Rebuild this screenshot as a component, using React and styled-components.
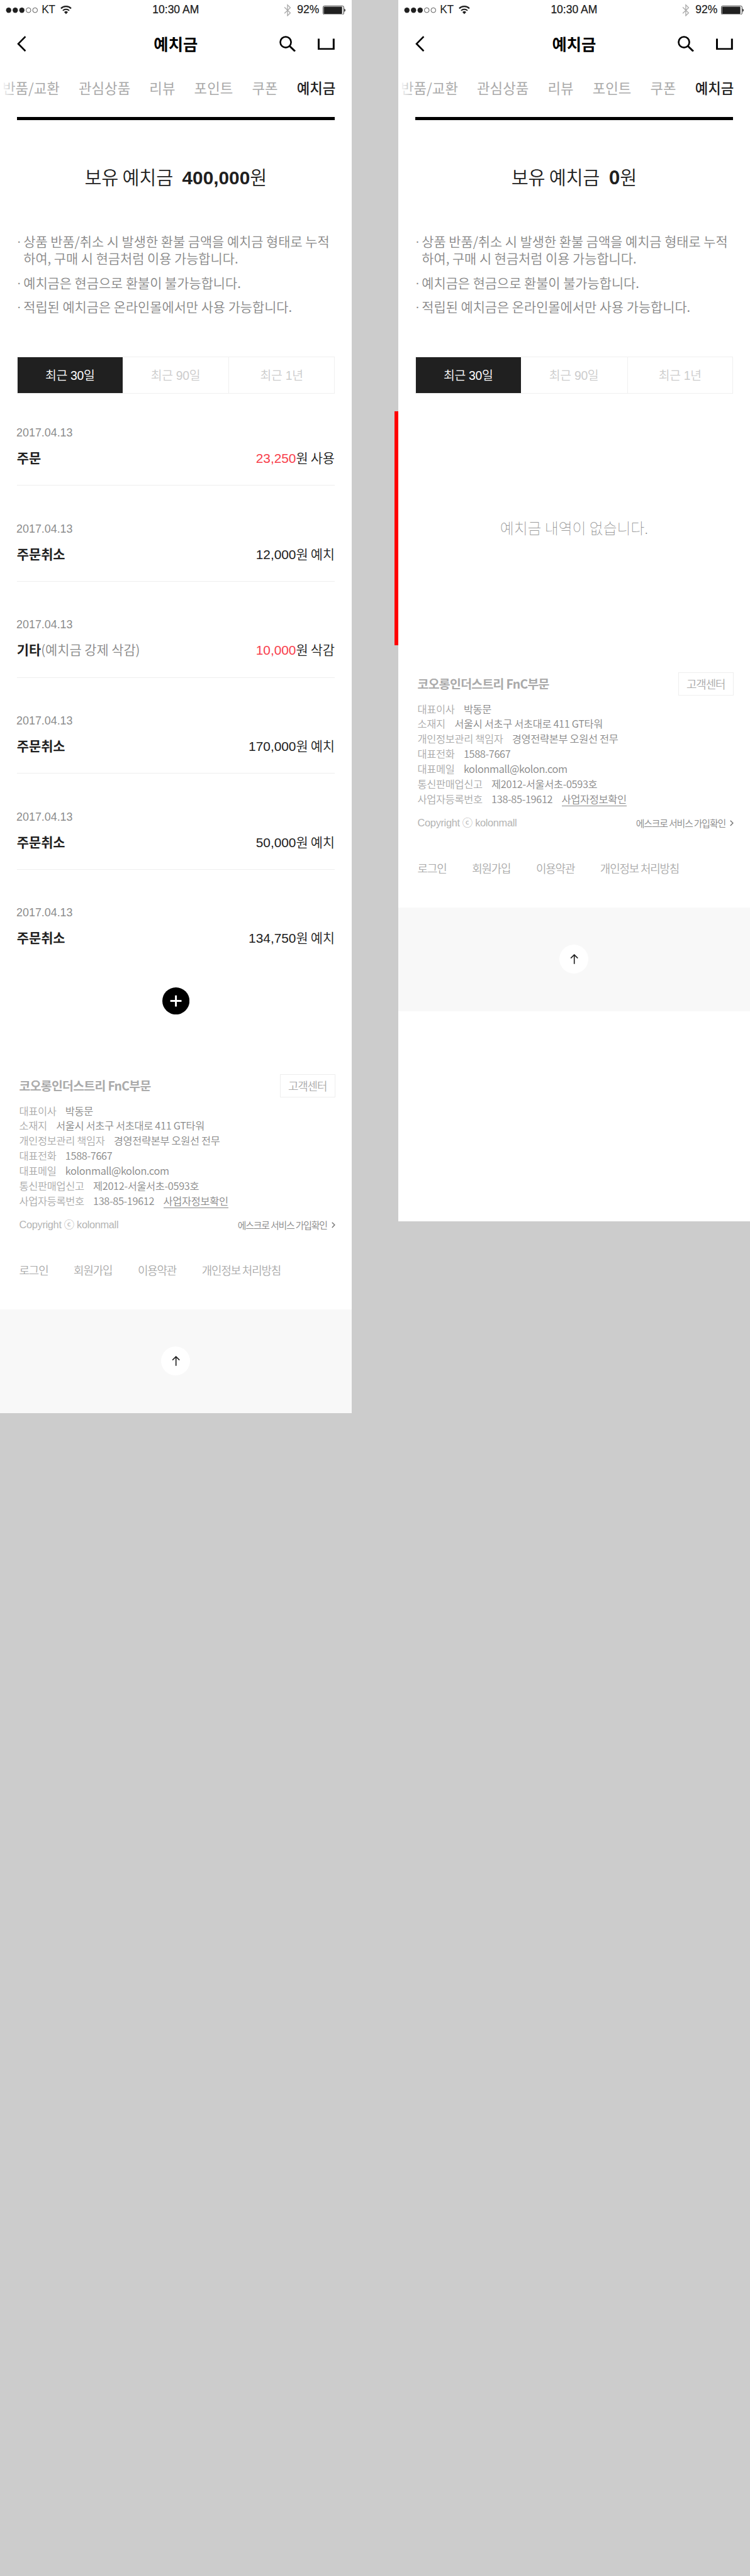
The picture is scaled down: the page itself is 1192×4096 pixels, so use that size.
import React from "react";
import styled, { createGlobalStyle } from "styled-components";

const SCALE = 0.7448;
const u = (n) => `${+(n * SCALE).toFixed(3)}px`;

const KR = `"Noto Sans CJK KR", sans-serif`;
const NUM = `"Liberation Sans", "Noto Sans CJK KR", sans-serif`;

const Global = createGlobalStyle`
  html, body { margin: 0; padding: 0; background: #ccc; }
  body { font-family: ${KR}; color: #202020; overflow-x: hidden; }
  *, *::before, *::after { box-sizing: border-box; }
  ul { list-style: none; margin: 0; padding: 0; }
  svg { display: block; flex: none; }
`;

const Board = styled.div`
  width: 1192px;
  height: 4096px;
  display: flex;
  align-items: flex-start;
  gap: ${u(100)};
  background: #ccc;
  overflow: hidden;
`;

const Screen = styled.section`
  position: relative;
  flex: none;
  width: ${u(750)};
  height: ${(p) => u(p.$height)};
  background: #fff;
`;

const StatusBar = styled.div`
  height: ${u(40)};
  padding: 0 ${u(12)};
  display: grid;
  grid-template-columns: 1fr auto 1fr;
  align-items: center;
  font: 400 ${u(23.5)} / ${u(40)} ${NUM};
`;

const StatusSide = styled.div`
  display: flex;
  align-items: center;
  justify-content: ${(p) => (p.$end ? "flex-end" : "flex-start")};
  height: ${u(40)};
  padding-top: ${u(1)};
`;

const Carrier = styled.span`
  margin: 0 ${u(12)} 0 ${u(7)};
  padding-top: ${u(1)};
  letter-spacing: ${u(-0.8)};
`;

const Clock = styled.span`
  padding-top: ${u(2)};
  -webkit-text-stroke: 0.25px #202020;
`;

const Percent = styled.span`
  margin: 0 ${u(8)} 0 ${u(13)};
  padding-top: ${u(1)};
  -webkit-text-stroke: 0.2px #202020;
`;

const TitleBar = styled.header`
  height: ${u(100)};
  padding: ${u(7)} ${u(36)} 0;
  display: grid;
  grid-template-columns: 1fr auto 1fr;
  align-items: center;
  color: #000;
`;

const PageTitle = styled.h1`
  margin: 0;
  font-size: ${u(34)};
  line-height: ${u(50)};
  font-weight: 700;
`;

const Actions = styled.div`
  display: flex;
  justify-content: flex-end;
  align-items: center;
  gap: ${u(46)};
`;

const Tabs = styled.nav`
  position: relative;
  height: ${u(110)};
  padding: ${u(25)} ${u(34)} 0 0;
  display: flex;
  justify-content: flex-end;
  gap: ${u(40.5)};
  overflow: hidden;
  font-size: ${u(30)};
  line-height: ${u(44)};
  white-space: nowrap;

  &::before {
    content: "";
    position: absolute;
    left: 0;
    top: 0;
    width: ${u(34)};
    height: 100%;
    background: linear-gradient(90deg, #fff 10%, rgba(255, 255, 255, 0));
  }
`;

const Tab = styled.span`
  flex: none;
  color: ${(p) => (p.$active ? "#202020" : "#aaa")};
  font-weight: ${(p) => (p.$active ? 500 : 400)};
`;

const Rule = styled.div`
  height: ${u(6)};
  margin: 0 ${u(36)};
  background: #000;
`;

const Balance = styled.p`
  margin: 0;
  padding-top: ${u(91)};
  height: ${u(241)};
  text-align: center;
  font-size: ${u(39.5)};
  line-height: ${u(60)};
  letter-spacing: ${u(-0.3)};
  font-weight: 350;
  white-space: pre;

  b {
    margin-left: ${u(11)};
    font-family: ${(p) => (p.$plain ? KR : NUM)};
    font-size: ${u(40)};
    letter-spacing: 0;
    font-weight: 700;
  }
`;

const Notes = styled.ul`
  height: ${u(264)};
  padding: 0 ${u(36)};
  display: flex;
  flex-direction: column;
  gap: ${u(16)};
  font-size: ${u(28)};
  line-height: ${u(36)};
  font-weight: 350;
  color: #888;
  white-space: nowrap;
`;

const Note = styled.li`
  display: flex;

  &::before {
    content: "·";
    width: ${u(14)};
    font-family: "Liberation Sans", sans-serif;
  }
`;

const Periods = styled.div`
  height: ${u(80)};
  margin: 0 ${u(36)};
  display: grid;
  grid-template-columns: ${u(224)} ${u(228)} 1fr;
  border: ${u(2)} solid #f0f0f0;
`;

const Period = styled.button`
  margin: 0;
  padding: 0 0 ${u(1)};
  border: 0;
  border-right: ${(p) => (p.$divided ? `${u(2)} solid #f0f0f0` : "0")};
  font-family: ${NUM};
  font-size: ${u(26)};
  letter-spacing: ${u(-0.4)};
  font-weight: 350;
  color: ${(p) => (p.$active ? "#fff" : "#ccc")};
  background: ${(p) => (p.$active ? "#202020" : "#fff")};
`;

const History = styled.ul`
  padding: 0 ${u(36)};
`;

const Entry = styled.li`
  height: ${(p) => u(p.$first ? 196 : 205)};
  padding-top: ${(p) => u(p.$first ? 68 : 77)};
  border-bottom: ${u(2)} solid ${(p) => (p.$last ? "transparent" : "#eee")};
`;

const EntryDate = styled.div`
  margin-left: ${u(-1)};
  font: 400 ${u(24)} / ${u(30)} ${NUM};
  color: #8c8c8c;
`;

const EntryLine = styled.div`
  margin-top: ${u(17)};
  display: flex;
  justify-content: space-between;
  font-size: ${u(28)};
  line-height: ${u(42)};
`;

const Kind = styled.span`
  font-weight: 700;

  small {
    font-size: inherit;
    font-weight: 350;
    color: #888;
  }
`;

const Amount = styled.span`
  font-weight: 350;
  letter-spacing: ${u(-0.3)};

  em {
    font-family: ${NUM};
    font-style: normal;
    letter-spacing: 0;
    color: ${(p) => (p.$minus ? "#f83e4b" : "inherit")};
  }
`;

const MoreRow = styled.div`
  display: flex;
  justify-content: center;
  padding-top: ${u(46)};
  height: ${u(231)};
`;

const Empty = styled.p`
  margin: 0;
  height: ${u(594)};
  padding-top: ${u(264)};
  text-align: center;
  font-size: ${u(32)};
  line-height: ${u(44)};
  font-weight: 100;
  color: #888;
`;

const Marker = styled.div`
  position: absolute;
  left: ${u(-8)};
  top: ${u(878)};
  width: ${u(8)};
  height: ${u(500)};
  background: #f00;
`;

const Footer = styled.footer`
  height: ${u(502)};
  padding: 0 ${u(35)} 0 ${u(41)};
  color: #aaa;
  white-space: nowrap;
`;

const FooterHead = styled.div`
  display: flex;
  justify-content: space-between;
  align-items: center;
  height: ${u(50)};
`;

const Company = styled.strong`
  font-size: ${u(26)};
  line-height: ${u(38)};
  padding-bottom: ${u(1)};
  letter-spacing: ${u(-0.9)};
  font-weight: 700;
`;

const HelpButton = styled.button`
  width: ${u(118)};
  height: ${u(50)};
  padding: 0;
  border: ${u(2)} solid #eee;
  background: none;
  color: inherit;
  font-family: inherit;
  font-size: ${u(24)};
  font-weight: 350;
  letter-spacing: ${u(-1.5)};
`;

const Info = styled.div`
  padding-top: ${u(13)};
  font-size: ${u(22)};
  line-height: ${u(32)};
  font-weight: 350;
  letter-spacing: ${u(-0.45)};
`;

const InfoRow = styled.div`
  display: flex;
  gap: ${u(19.3)};
`;

const InfoValue = styled.span`
  color: #888;
  height: ${u(31)};
  border-bottom: ${(p) => (p.$link ? `${u(2)} solid #888` : "0")};
`;

const Legal = styled.div`
  display: flex;
  justify-content: space-between;
  align-items: center;
  height: ${u(32)};
  margin-top: ${u(20)};
`;

const Copyright = styled.span`
  font: 400 ${u(22)} / ${u(32)} ${NUM};
  letter-spacing: ${u(-0.45)};
  color: #b4b4b4;
`;

const Escrow = styled.span`
  display: flex;
  align-items: center;
  gap: ${u(9)};
  font-size: ${u(20)};
  line-height: ${u(32)};
  letter-spacing: ${u(-1.55)};
  font-weight: 350;
  color: #888;
`;

const FooterNav = styled.nav`
  display: flex;
  gap: ${u(54.5)};
  margin-top: ${u(61)};
  font-size: ${u(24)};
  line-height: ${u(36)};
  letter-spacing: ${u(-1.5)};
  font-weight: 350;
`;

const TopBand = styled.div`
  height: ${u(222)};
  display: flex;
  align-items: center;
  justify-content: center;
  background: #f8f8f8;
`;

const TopButton = styled.button`
  width: ${u(62)};
  height: ${u(62)};
  padding: 0;
  border: 0;
  border-radius: 50%;
  background: #fff;
  display: flex;
  align-items: center;
  justify-content: center;
`;

const Icon = ({ w, h, children }) => (
  <svg width={w * SCALE} height={h * SCALE} viewBox={`0 0 ${w} ${h}`} fill="none">
    {children}
  </svg>
);

const Signal = () => (
  <Icon w={70} h={14}>
    {[0, 1, 2].map((i) => (
      <circle key={i} cx={6.4 + i * 14.1} cy="7" r="5.6" fill="#202020" />
    ))}
    {[3, 4].map((i) => (
      <circle key={i} cx={6.4 + i * 14.1} cy="7" r="5.1" stroke="#202020" />
    ))}
  </Icon>
);

const Wifi = () => (
  <Icon w={24} h={18}>
    <path d="M1.2 5.9a15.3 15.3 0 0 1 21.6 0" stroke="#202020" strokeWidth="2.9" />
    <path d="M5.2 10.6a9.6 9.6 0 0 1 13.6 0" stroke="#202020" strokeWidth="2.7" />
    <path d="M12 18l-4-4.2a5.7 5.7 0 0 1 8 0z" fill="#202020" />
  </Icon>
);

const Bluetooth = () => (
  <Icon w={16} h={28}>
    <path d="M1.500 7.500l12.500 12L8 25.500v-23l6 6-12.500 12" stroke="#aaa" strokeWidth="1.800" />
  </Icon>
);

const Battery = () => (
  <Icon w={49} h={20}>
    <rect x="0.75" y="0.75" width="44" height="18" rx="2.5" stroke="#202020" strokeWidth="1.2" />
    <rect x="2.2" y="2.2" width="39" height="15.1" rx="1.2" fill="#202020" />
    <path d="M46 6.500c3 1 3 5.500 0 6.500z" fill="#202020" />
  </Icon>
);

const Phone = ({ height, marker, balance, plain, entries }) => (
  <Screen $height={height}>
    <StatusBar>
      <StatusSide>
        <Signal />
        <Carrier>KT</Carrier>
        <Wifi />
      </StatusSide>
      <Clock>10:30 AM</Clock>
      <StatusSide $end>
        <Bluetooth />
        <Percent>92%</Percent>
        <Battery />
      </StatusSide>
    </StatusBar>
    <TitleBar>
      <Icon w={20} h={34}>
        <path d="M18 1.500L2.800 17 18 32.500" stroke="#000" strokeWidth="3.600" />
      </Icon>
      <PageTitle>예치금</PageTitle>
      <Actions>
        <Icon w={36} h={34}>
          <circle cx="13.500" cy="13.500" r="11.500" stroke="#000" strokeWidth="3.500" />
          <path d="M21.500 21.500L33.500 33" stroke="#000" strokeWidth="4" />
        </Icon>
        <Icon w={36} h={26}>
          <path d="M2 2v22h32V2" stroke="#000" strokeWidth="4" />
        </Icon>
      </Actions>
    </TitleBar>
    <Tabs>
      {["반품/교환", "관심상품", "리뷰", "포인트", "쿠폰", "예치금"].map((t) => (
        <Tab key={t} $active={t === "예치금"}>{t}</Tab>
      ))}
    </Tabs>
    <Rule />
    <Balance $plain={plain}>보유 예치금 <b>{balance}</b>원</Balance>
    <Notes>
      <Note>
        <span>상품 반품/취소 시 발생한 환불 금액을 예치금 형태로 누적<br />하여, 구매 시 현금처럼 이용 가능합니다.</span>
      </Note>
      <Note>예치금은 현금으로 환불이 불가능합니다.</Note>
      <Note>적립된 예치금은 온라인몰에서만 사용 가능합니다.</Note>
    </Notes>
    <Periods>
      <Period $active>최근 30일</Period>
      <Period $divided>최근 90일</Period>
      <Period>최근 1년</Period>
    </Periods>
    {entries ? (
      <>
        <History>
          {entries.map((e, i) => (
            <Entry key={i} $first={i === 0} $last={i === entries.length - 1}>
              <EntryDate>2017.04.13</EntryDate>
              <EntryLine>
                <Kind>{e.kind}{e.note && <small>{e.note}</small>}</Kind>
                <Amount $minus={e.minus}><em>{e.amount}</em>원 {e.action}</Amount>
              </EntryLine>
            </Entry>
          ))}
        </History>
        <MoreRow>
          <Icon w={58} h={58}>
            <circle cx="29" cy="29" r="29" fill="#000" />
            <path d="M29 17v24M17 29h24" stroke="#fff" strokeWidth="4" />
          </Icon>
        </MoreRow>
      </>
    ) : (
      <Empty>예치금 내역이 없습니다.</Empty>
    )}
    <Footer>
      <FooterHead>
        <Company>코오롱인더스트리 FnC부문</Company>
        <HelpButton>고객센터</HelpButton>
      </FooterHead>
      <Info>
        <InfoRow>대표이사<InfoValue>박동문</InfoValue></InfoRow>
        <InfoRow>소재지<InfoValue>서울시 서초구 서초대로 411 GT타워</InfoValue></InfoRow>
        <InfoRow>개인정보관리 책임자<InfoValue>경영전략본부 오원선 전무</InfoValue></InfoRow>
        <InfoRow>대표전화<InfoValue>1588-7667</InfoValue></InfoRow>
        <InfoRow>대표메일<InfoValue>kolonmall@kolon.com</InfoValue></InfoRow>
        <InfoRow>통신판매업신고<InfoValue>제2012-서울서초-0593호</InfoValue></InfoRow>
        <InfoRow>
          사업자등록번호<InfoValue>138-85-19612</InfoValue><InfoValue $link>사업자정보확인</InfoValue>
        </InfoRow>
      </Info>
      <Legal>
        <Copyright>Copyright ⓒ kolonmall</Copyright>
        <Escrow>
          에스크로 서비스 가입확인
          <Icon w={8} h={13}>
            <path d="M1 1l5.500 5.500L1 12" stroke="#777" strokeWidth="2" />
          </Icon>
        </Escrow>
      </Legal>
      <FooterNav>
        <span>로그인</span>
        <span>회원가입</span>
        <span>이용약관</span>
        <span>개인정보 처리방침</span>
      </FooterNav>
    </Footer>
    <TopBand>
      <TopButton>
        <Icon w={18} h={22}>
          <path d="M9 1.500V21M1.500 9L9 1.500 16.500 9" stroke="#202020" strokeWidth="2.200" />
        </Icon>
      </TopButton>
    </TopBand>
    {marker && <Marker />}
  </Screen>
);

const ENTRIES = [
  { kind: "주문", amount: "23,250", action: "사용", minus: true },
  { kind: "주문취소", amount: "12,000", action: "예치" },
  { kind: "기타", note: "(예치금 강제 삭감)", amount: "10,000", action: "삭감", minus: true },
  { kind: "주문취소", amount: "170,000", action: "예치" },
  { kind: "주문취소", amount: "50,000", action: "예치" },
  { kind: "주문취소", amount: "134,750", action: "예치" },
];

export default function App() {
  return (
    <>
      <Global />
      <Board>
        <Phone height={3016} balance="400,000" entries={ENTRIES} />
        <Phone height={2607} balance="0" plain marker />
      </Board>
    </>
  );
}
